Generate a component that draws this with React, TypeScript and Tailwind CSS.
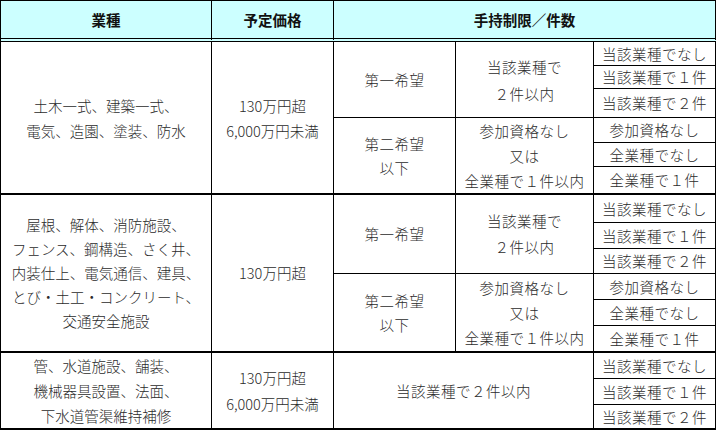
import type { ReactNode } from 'react';

const line = 'border-r border-black';
const head = `${line} border-b-4 border-double bg-[#ccffff] p-0 text-center align-middle font-bold text-[#111]`;

function Cell({
    children,
    rowSpan,
    colSpan,
    thick,
    wide,
}: {
    children: ReactNode;
    rowSpan?: number;
    colSpan?: number;
    thick?: boolean;
    wide?: boolean;
}) {
    return (
        <td
            rowSpan={rowSpan}
            colSpan={colSpan}
            className={`${line} ${thick ? 'border-b-2' : 'border-b'} p-0 text-center align-middle ${wide ? 'tracking-[0.5px]' : ''}`}
        >
            {children}
        </td>
    );
}

function Lines({ items, lh }: { items: string[]; lh: string }) {
    return (
        <div className={lh}>
            {items.map((t) => (
                <div key={t}>{t}</div>
            ))}
        </div>
    );
}

const own = ['当該業種でなし', '当該業種で１件', '当該業種で２件'];
const all = ['参加資格なし', '全業種でなし', '全業種で１件'];

export default function App() {
    return (
        <div className="bg-white w-[717px] h-[432px] text-[#2b2b2b] text-[14.5px] font-light font-['Noto_Sans_CJK_JP',sans-serif]">
            <table className="table-fixed border-separate border-spacing-0 border-l border-t border-black w-[716px]">
                <colgroup>
                    <col className="w-[211px]" />
                    <col className="w-[122px]" />
                    <col className="w-[122px]" />
                    <col className="w-[138px]" />
                    <col className="w-[122px]" />
                </colgroup>
                <tbody>
                    <tr className="h-[41px]">
                        <td className={head}>業種</td>
                        <td className={head}>予定価格</td>
                        <td colSpan={3} className={head}>
                            手持制限／件数
                        </td>
                    </tr>

                    {/* 土木一式 ほか */}
                    <tr className="h-[24px]">
                        <Cell rowSpan={6} thick>
                            <Lines lh="leading-[25px]" items={['土木一式、建築一式、', '電気、造園、塗装、防水']} />
                        </Cell>
                        <Cell rowSpan={6} thick>
                            <Lines lh="leading-[25px]" items={['130万円超', '6,000万円未満']} />
                        </Cell>
                        <Cell rowSpan={3} wide>第一希望</Cell>
                        <Cell rowSpan={3} wide>
                            <Lines lh="leading-[27px]" items={['当該業種で', '２件以内']} />
                        </Cell>
                        <Cell wide>{own[0]}</Cell>
                    </tr>
                    <tr className="h-[23px]">
                        <Cell wide>{own[1]}</Cell>
                    </tr>
                    <tr className="h-[29px]">
                        <Cell wide>{own[2]}</Cell>
                    </tr>
                    <tr className="h-[25px]">
                        <Cell rowSpan={3} thick wide>
                            <Lines lh="leading-[24px]" items={['第二希望', '以下']} />
                        </Cell>
                        <Cell rowSpan={3} thick wide>
                            <Lines lh="leading-[25px]" items={['参加資格なし', '又は', '全業種で１件以内']} />
                        </Cell>
                        <Cell wide>{all[0]}</Cell>
                    </tr>
                    <tr className="h-[23px]">
                        <Cell wide>{all[1]}</Cell>
                    </tr>
                    <tr className="h-[28px]">
                        <Cell thick wide>{all[2]}</Cell>
                    </tr>

                    {/* 屋根 ほか */}
                    <tr className="h-[28px]">
                        <Cell rowSpan={6} thick>
                            <Lines
                                lh="leading-[24px]"
                                items={[
                                    '屋根、解体、消防施設、',
                                    'フェンス、鋼構造、さく井、',
                                    '内装仕上、電気通信、建具、',
                                    'とび・土工・コンクリート、',
                                    '交通安全施設',
                                ]}
                            />
                        </Cell>
                        <Cell rowSpan={6} thick>130万円超</Cell>
                        <Cell rowSpan={3} wide>第一希望</Cell>
                        <Cell rowSpan={3} wide>
                            <Lines lh="leading-[26px]" items={['当該業種で', '２件以内']} />
                        </Cell>
                        <Cell wide>{own[0]}</Cell>
                    </tr>
                    <tr className="h-[26px]">
                        <Cell wide>{own[1]}</Cell>
                    </tr>
                    <tr className="h-[25px]">
                        <Cell wide>{own[2]}</Cell>
                    </tr>
                    <tr className="h-[26px]">
                        <Cell rowSpan={3} thick wide>
                            <Lines lh="leading-[24px]" items={['第二希望', '以下']} />
                        </Cell>
                        <Cell rowSpan={3} thick wide>
                            <Lines lh="leading-[25px]" items={['参加資格なし', '又は', '全業種で１件以内']} />
                        </Cell>
                        <Cell wide>{all[0]}</Cell>
                    </tr>
                    <tr className="h-[26px]">
                        <Cell wide>{all[1]}</Cell>
                    </tr>
                    <tr className="h-[27px]">
                        <Cell thick wide>{all[2]}</Cell>
                    </tr>

                    {/* 管 ほか */}
                    <tr className="h-[26px]">
                        <Cell rowSpan={3} thick>
                            <Lines
                                lh="leading-[25px]"
                                items={['管、水道施設、舗装、', '機械器具設置、法面、', '下水道管渠維持補修']}
                            />
                        </Cell>
                        <Cell rowSpan={3} thick>
                            <Lines lh="leading-[26px]" items={['130万円超', '6,000万円未満']} />
                        </Cell>
                        <Cell rowSpan={3} colSpan={2} thick wide>
                            当該業種で２件以内
                        </Cell>
                        <Cell wide>{own[0]}</Cell>
                    </tr>
                    <tr className="h-[26px]">
                        <Cell wide>{own[1]}</Cell>
                    </tr>
                    <tr className="h-[25px]">
                        <Cell thick wide>{own[2]}</Cell>
                    </tr>
                </tbody>
            </table>
        </div>
    );
}
